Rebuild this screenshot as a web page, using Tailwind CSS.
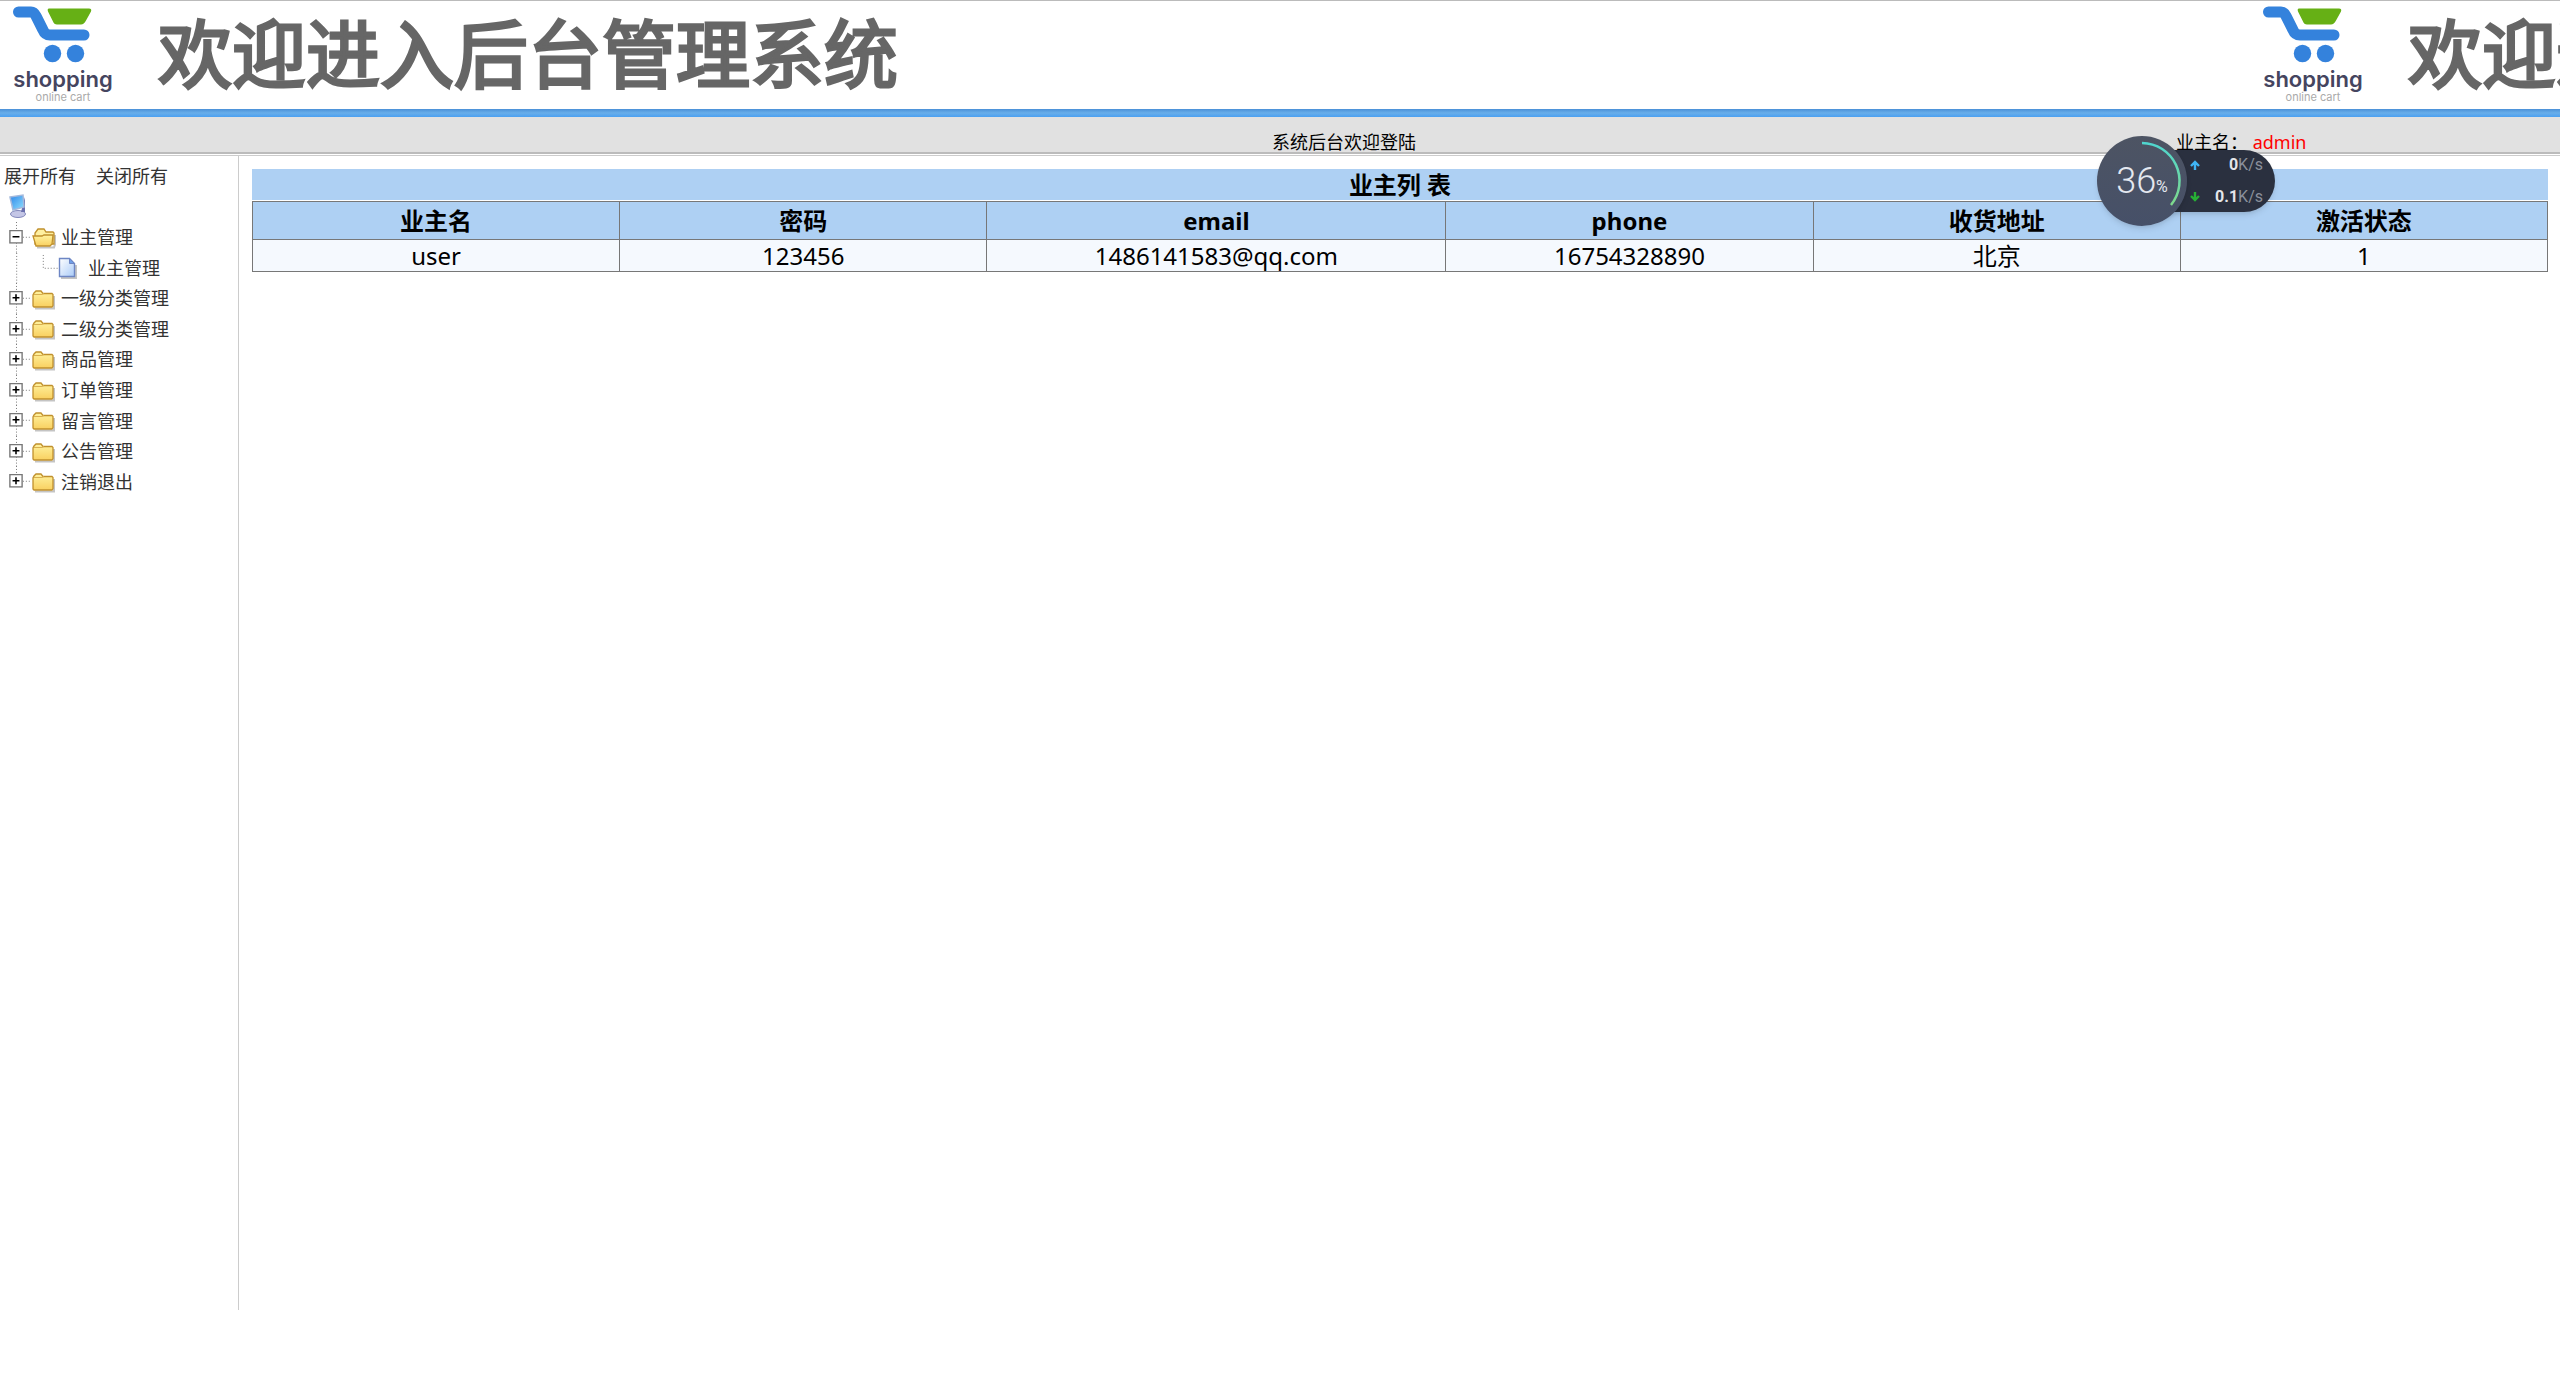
<!DOCTYPE html>
<html lang="zh">
  <head>
    <meta charset="UTF-8" />
    <meta name="viewport" content="width=device-width, initial-scale=1.0" />
    <title>后台管理系统</title>
    <script src="https://cdn.jsdelivr.net/npm/@tailwindcss/browser@4"></script>
  </head>
  <body class="min-h-screen bg-white text-lg text-black font-['Noto_Sans','Noto_Sans_CJK_SC',sans-serif]">
    <!-- Shared icons -->
    <svg class="absolute size-0" aria-hidden="true">
      <defs>
        <linearGradient id="gold" x1="0" y1="0" x2="0" y2="1">
          <stop offset="0" stop-color="#fff3a0" />
          <stop offset="1" stop-color="#f9d060" />
        </linearGradient>
        <linearGradient id="paper" x1="0" y1="0" x2="1" y2="1">
          <stop offset="0" stop-color="#ffffff" />
          <stop offset="1" stop-color="#a9cbf8" />
        </linearGradient>
        <linearGradient id="screen" x1="0" y1="0" x2="1" y2="1">
          <stop offset="0" stop-color="#2d86e8" />
          <stop offset="1" stop-color="#8fe0ff" />
        </linearGradient>
        <symbol id="folder" viewBox="0 0 24 22">
          <path d="M3 20.500h19V8" fill="none" stroke="#c4c4c4" stroke-width="2" />
          <path d="M1 18V7l1-2 2-2h5l2 2.500h9l1 1v11l-1 1.500H2z" fill="url(#gold)" stroke="#c0902c" stroke-width="1.300" />
          <path d="M2 6.500h8l2-1" fill="none" stroke="#d8b050" />
        </symbol>
        <symbol id="folder-open" viewBox="0 0 24 22">
          <path d="M5 20.500h17l1-3V8" fill="none" stroke="#c4c4c4" stroke-width="2" />
          <path d="M3 17V6l3-4h6l2 3h7l1 1v11z" fill="#fff0a0" stroke="#c0902c" stroke-width="1.300" />
          <path d="M1 9h9l2-1h9l-1 9-2 2H4z" fill="url(#gold)" stroke="#c0902c" stroke-width="1.300" />
        </symbol>
        <symbol id="page" viewBox="0 0 20 22">
          <path d="M3 21h15V8" fill="none" stroke="#c4c4c4" stroke-width="2" />
          <path d="M1.500 1.500h10l5 5v13h-15z" fill="url(#paper)" stroke="#6d86c4" stroke-width="1.400" />
          <path d="M11.500 1.500v5h5z" fill="#6f9fe8" stroke="#6d86c4" />
        </symbol>
        <symbol id="plus" viewBox="0 0 14 14">
          <path d="M.75.75h12.500v12.500H.75z" fill="#fff" stroke="#777" stroke-width="1.500" />
          <path d="M3.500 7h7M7 3.500v7" stroke="#000" stroke-width="1.600" />
        </symbol>
        <symbol id="minus" viewBox="0 0 14 14">
          <path d="M.75.75h12.500v12.500H.75z" fill="#fff" stroke="#777" stroke-width="1.500" />
          <path d="M3.500 7h7" stroke="#000" stroke-width="1.600" />
        </symbol>
        <symbol id="logo" viewBox="0 0 80 58">
          <path d="M6.500 7H19q3 0 5 4l7 14q2 5 7 5h34" fill="none" stroke="#3482dc" stroke-width="11" stroke-linecap="round" stroke-linejoin="round" />
          <path d="M37 3.500h40q3 0 2 3l-5 9q-2 4-5 4H45q-3 0-4-3l-5-10q-1-3 1-3z" fill="#66b015" />
          <circle cx="40.500" cy="48.500" r="8.700" fill="#3482dc" />
          <circle cx="63.500" cy="48.500" r="8.700" fill="#3482dc" />
        </symbol>
      </defs>
    </svg>

    <!-- Banner -->
    <header class="flex h-[109px] overflow-hidden border-t border-[#bbb]">
      <div class="flex w-[2250px] shrink-0">
        <div class="mr-11 ml-3 flex w-[102px] flex-col items-center">
          <svg class="mt-1 mr-auto h-[58px] w-20"><use href="#logo" /></svg>
          <span class="text-[22px] leading-8 font-semibold text-[#45455f] font-['Inter',sans-serif]">shopping</span>
          <span class="text-[11px] leading-1 text-[#aaa] font-['Inter',sans-serif]">online cart</span>
        </div>
        <h1 class="text-[74px] leading-[98px] font-normal whitespace-nowrap text-[#666] [-webkit-text-stroke:3px_#666] [stroke-linejoin:round] font-['Noto_Sans_CJK_SC',sans-serif]">欢迎进入后台管理系统</h1>
      </div>
      <div class="flex w-[2250px] shrink-0" aria-hidden="true">
        <div class="mr-11 ml-3 flex w-[102px] flex-col items-center">
          <svg class="mt-1 mr-auto h-[58px] w-20"><use href="#logo" /></svg>
          <span class="text-[22px] leading-8 font-semibold text-[#45455f] font-['Inter',sans-serif]">shopping</span>
          <span class="text-[11px] leading-1 text-[#aaa] font-['Inter',sans-serif]">online cart</span>
        </div>
        <div class="text-[74px] leading-[98px] font-normal whitespace-nowrap text-[#666] [-webkit-text-stroke:3px_#666] [stroke-linejoin:round] font-['Noto_Sans_CJK_SC',sans-serif]">欢迎进入后台管理系统</div>
      </div>
    </header>
    <div class="h-2 bg-linear-to-b from-[#4a90d8] via-[#68aeea] to-[#4ba0f0]"></div>

    <!-- Welcome bar -->
    <div class="grid h-[37px] grid-cols-[20%_65%_15%] border-b-2 border-[#bbb] bg-[#e1e1e1] leading-[50px]">
      <span></span>
      <span class="text-center">系统后台欢迎登陆</span>
      <span>业主名： <span class="text-[red]">admin</span></span>
    </div>

    <div class="mt-px flex border-t border-[#ccc]">
      <!-- Menu tree -->
      <nav class="h-[1154px] w-[239px] shrink-0 border-r border-[#ccc] pt-[6px] text-[#333]">
        <div class="flex gap-5 pl-1 leading-7">
          <a href="#">展开所有</a>
          <a href="#">关闭所有</a>
        </div>
        <svg class="mt-1 ml-2 h-6 w-5" viewBox="0 0 20 24">
          <ellipse cx="10" cy="20" rx="7.500" ry="3.500" fill="#c4c6e6" stroke="#8288bb" />
          <path d="M13 18l4-15v15z" fill="#6a70ae" />
          <path d="M2 3l13-2 1 12-11 3z" fill="url(#screen)" stroke="#a3b8dc" stroke-width="1.500" />
        </svg>
        <ul id="tree" class="mt-1 grid h-[275px] auto-rows-fr"></ul>
      </nav>

      <!-- Owner list -->
      <main class="min-w-0 grow pt-[13px] pr-3 pl-[13px]">
        <table class="w-full table-fixed border-collapse text-center text-2xl text-black">
          <caption class="mb-px h-[31px] bg-[#aed0f3] leading-[31px] font-bold">业主列 表</caption>
          <colgroup>
            <col class="w-[16%]" /><col class="w-[16%]" /><col class="w-[20%]" />
            <col class="w-[16%]" /><col class="w-[16%]" /><col class="w-[16%]" />
          </colgroup>
          <thead>
            <tr class="h-[38px] bg-[#aed0f3] leading-[37px] *:border *:border-[#777] *:p-0 *:font-bold">
              <th>业主名</th>
              <th>密码</th>
              <th>email</th>
              <th>phone</th>
              <th>收货地址</th>
              <th>激活状态</th>
            </tr>
          </thead>
          <tbody>
            <tr class="h-8 bg-[#f5f9fe] leading-[31px] *:border *:border-[#777] *:p-0">
              <td>user</td>
              <td>123456</td>
              <td>1486141583@qq.com</td>
              <td>16754328890</td>
              <td>北京</td>
              <td>1</td>
            </tr>
          </tbody>
        </table>
      </main>
    </div>

    <!-- Floating network monitor -->
    <div class="absolute top-[136px] right-[285px] flex h-[90px] w-[178px] items-center font-['Roboto',sans-serif]">
      <div class="ml-11 flex h-[62px] grow flex-col justify-between rounded-r-full bg-[#2a303f] py-[3px] pr-3 pl-[49px] shadow-md">
        <div class="flex items-center leading-6">
          <svg class="size-[10px]" viewBox="0 0 10 10"><path d="M5 10V2M1 6l4-4 4 4" fill="none" stroke="#3fb4f4" stroke-width="2.400" /></svg>
          <span class="ml-auto text-base font-bold text-[#e4e6ea]">0</span><span class="text-base text-[#8b909b]">K/s</span>
        </div>
        <div class="flex items-center leading-6">
          <svg class="size-[10px]" viewBox="0 0 10 10"><path d="M5 0v8M1 4l4 4 4-4" fill="none" stroke="#27b035" stroke-width="2.400" /></svg>
          <span class="ml-auto text-base font-bold text-[#e4e6ea]">0.1</span><span class="text-base text-[#8b909b]">K/s</span>
        </div>
      </div>
      <div class="absolute left-0 flex size-[90px] items-center justify-center rounded-full bg-linear-to-b from-[#4d5463] to-[#465068] text-[#e4e8f0] shadow-md">
        <svg class="absolute inset-0 size-full" viewBox="0 0 90 90">
          <defs>
            <linearGradient id="arc" x1="0" y1="0" x2="0" y2="1">
              <stop offset="0" stop-color="#4fd6cf" />
              <stop offset="1" stop-color="#7fd98c" />
            </linearGradient>
          </defs>
          <path d="M45 7A38 38 0 0 1 74 69" fill="none" stroke="url(#arc)" stroke-width="2.500" />
        </svg>
        <span class="text-4xl font-light">36</span><span class="mt-3 text-base">%</span>
      </div>
    </div>

    <script>
      const items = [
        { name: "业主管理", open: true },
        { name: "业主管理", child: true },
        { name: "一级分类管理" },
        { name: "二级分类管理" },
        { name: "商品管理" },
        { name: "订单管理" },
        { name: "留言管理" },
        { name: "公告管理" },
        { name: "注销退出" },
      ];
      const tree = document.querySelector("#tree");
      items.forEach(function (item, i) {
        const last = i === items.length - 1;
        const line = `<path d="M16.500 0V${last ? 15 : 31}" stroke="#777" stroke-dasharray="1 2" />`;
        let row;
        if (item.child) {
          row = `
            <svg class="h-full w-[58px]" viewBox="0 0 58 31" fill="none">${line}
              <path d="M43.500 2V15.500H58" stroke="#777" stroke-dasharray="1 2" /></svg>
            <svg class="h-[22px] w-5"><use href="#page" /></svg>
            <a href="#" class="ml-[10px]">${item.name}</a>`;
        } else {
          row = `
            <svg class="h-full w-8" viewBox="0 0 32 31" fill="none">${line}
              <path d="M23 15.500H32" stroke="#777" stroke-dasharray="1 2" />
              <use href="#${item.open ? "minus" : "plus"}" x="9" y="8" width="14" height="14" /></svg>
            <svg class="mt-px h-[22px] w-6"><use href="#${item.open ? "folder-open" : "folder"}" /></svg>
            <a href="#" class="ml-[5px]">${item.name}</a>`;
        }
        tree.insertAdjacentHTML("beforeend", `<li class="flex items-center leading-7">${row}</li>`);
      });
    </script>
  </body>
</html>
